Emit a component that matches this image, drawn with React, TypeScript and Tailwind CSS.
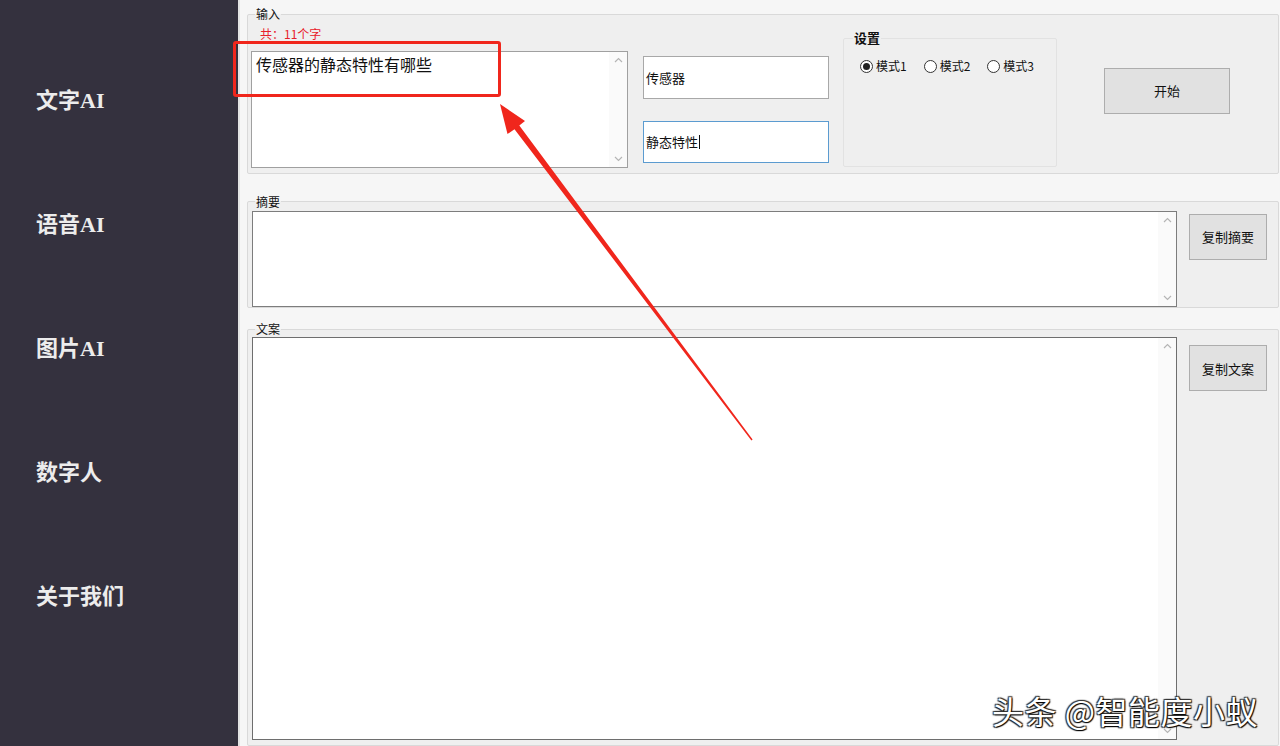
import React from 'react';

const ui = { fontFamily: '"Noto Sans CJK SC", "Noto Sans", sans-serif' };

function Chevron({ up }: { up?: boolean }) {
  return (
    <svg width="9" height="6" viewBox="0 0 9 6" className="text-[#b5b5b5]">
      <path
        d={up ? 'M1 5 L4.5 1.5 L8 5' : 'M1 1 L4.5 4.5 L8 1'}
        fill="none"
        stroke="currentColor"
        strokeWidth="1.2"
      />
    </svg>
  );
}

function TextBox({ className, children }: { className: string; children?: React.ReactNode }) {
  return (
    <div className={`flex bg-white border ${className}`}>
      <div className="flex-1 overflow-hidden">{children}</div>
      <div className="w-[18px] flex flex-col items-center justify-between py-[5px] bg-[#fafafa]">
        <Chevron up />
        <Chevron />
      </div>
    </div>
  );
}

function WinButton({ className, label }: { className: string; label: string }) {
  return (
    <button className={`bg-[#e1e1e1] border border-[#adadad] text-[13px] text-[#111] shrink-0 ${className}`}>
      {label}
    </button>
  );
}

function Radio({ checked, label }: { checked?: boolean; label: string }) {
  return (
    <div className="flex items-center gap-[3px]">
      <span className="w-[13px] h-[13px] rounded-full border border-[#333] bg-white flex items-center justify-center">
        {checked && <span className="w-[7px] h-[7px] rounded-full bg-[#222]" />}
      </span>
      <span className="text-[12px] text-[#111]">{label}</span>
    </div>
  );
}

function Sidebar() {
  const items = ['文字AI', '语音AI', '图片AI', '数字人', '关于我们'];
  return (
    <div className="w-[238px] shrink-0 bg-[#34313e] pt-[38px] flex flex-col">
      {items.map(it => (
        <div
          key={it}
          className="h-[124px] flex items-center pl-[36px] text-[22px] font-bold text-[#ececec]"
          style={{ fontFamily: '"Liberation Serif", "Noto Sans CJK SC", serif' }}
        >
          {it}
        </div>
      ))}
    </div>
  );
}

export default function App() {
  return (
    <div className="relative w-[1280px] h-[746px] overflow-hidden flex" style={ui}>
      <Sidebar />

      <div className="flex-1 bg-[#f6f6f6] border-l-2 border-[#e4e4e4] pl-[7px] pr-[1px] flex flex-col">
        {/* 输入 */}
        <fieldset className="mt-[6px] h-[170px] border border-[#d9d9d9] bg-[#efefef] rounded-[2px]">
          <legend className="ml-[7px] px-[1px] text-[12px] leading-[16px] text-[#111]">输入</legend>
          <div className="flex items-start">
            <div className="ml-[3px] w-[377px]">
              <div className="mt-[4px] h-[16px] pl-[9px] text-[12px] leading-[16px] text-[#e8202a]">共：11个字</div>
              <TextBox className="mt-[9px] h-[117px] border-[#a0a0a0]">
                <div className="pl-[4px] pt-[1px] text-[16px] leading-[22px] text-[#111]">传感器的静态特性有哪些</div>
              </TextBox>
            </div>

            <div className="ml-[15px] w-[186px] shrink-0">
              <div className="mt-[34px] h-[43px] bg-white border border-[#a8a8a8] flex items-center pl-[2px] text-[13px] text-[#111]">
                传感器
              </div>
              <div className="mt-[22px] h-[42px] bg-white border border-[#5b9bd0] flex items-center pl-[2px] text-[13px] text-[#111]">
                静态特性<span className="ml-[1px] w-px h-[14px] bg-[#111]" />
              </div>
            </div>

            <fieldset className="ml-[14px] mt-[8px] w-[214px] h-[137px] shrink-0 border border-[#e2e2e2] rounded-[2px]">
              <legend className="ml-[9px] px-[1px] text-[13px] leading-[16px] font-bold text-[#111]">设置</legend>
              <div className="mt-[12px] h-[16px] pl-[16px] flex items-center gap-[17px]">
                <Radio checked label="模式1" />
                <Radio label="模式2" />
                <Radio label="模式3" />
              </div>
            </fieldset>

            <WinButton className="ml-[47px] mt-[46px] w-[126px] h-[46px]" label="开始" />
          </div>
        </fieldset>

        {/* 摘要 */}
        <fieldset className="mt-[20px] h-[116px] border border-[#d9d9d9] bg-[#efefef] rounded-[2px]">
          <legend className="ml-[7px] px-[1px] text-[12px] leading-[16px] text-[#111]">摘要</legend>
          <div className="flex items-start">
            <TextBox className="ml-[4px] mt-[1px] w-[925px] h-[96px] border-[#7d7d7d]" />
            <WinButton className="ml-[12px] mt-[4px] w-[78px] h-[46px]" label="复制摘要" />
          </div>
        </fieldset>

        {/* 文案 */}
        <fieldset className="mt-[13px] h-[430px] border border-[#d9d9d9] bg-[#efefef] rounded-[2px]">
          <legend className="ml-[7px] px-[1px] text-[12px] leading-[16px] text-[#111]">文案</legend>
          <div className="flex items-start">
            <TextBox className="ml-[4px] w-[925px] h-[403px] border-[#6e6e6e]" />
            <WinButton className="ml-[12px] mt-[8px] w-[78px] h-[46px]" label="复制文案" />
          </div>
        </fieldset>
      </div>

      {/* annotation: red box and arrow */}
      <div className="absolute left-[233px] top-[41px] w-[268px] h-[56px] border-[3px] border-[#f0261c] rounded-[3px] pointer-events-none" />
      <svg className="absolute inset-0 pointer-events-none" width="1280" height="746" viewBox="0 0 1280 746">
        <polygon
          points="500,104 525,121 519.3,125.6 752.6,439.5 751.4,440.5 514.5,129.2 507.5,134"
          fill="#f0261c"
        />
      </svg>

      {/* watermark */}
      <div
        className="absolute right-[22px] top-[689px] text-[32px] leading-[42px] text-white tracking-[0.5px] [text-shadow:1px_1px_1px_#000,-1px_-1px_1px_#333,1px_-1px_1px_#333,-1px_1px_1px_#333]"
        style={ui}
      >
        头条 @智能度小蚁
      </div>
    </div>
  );
}
